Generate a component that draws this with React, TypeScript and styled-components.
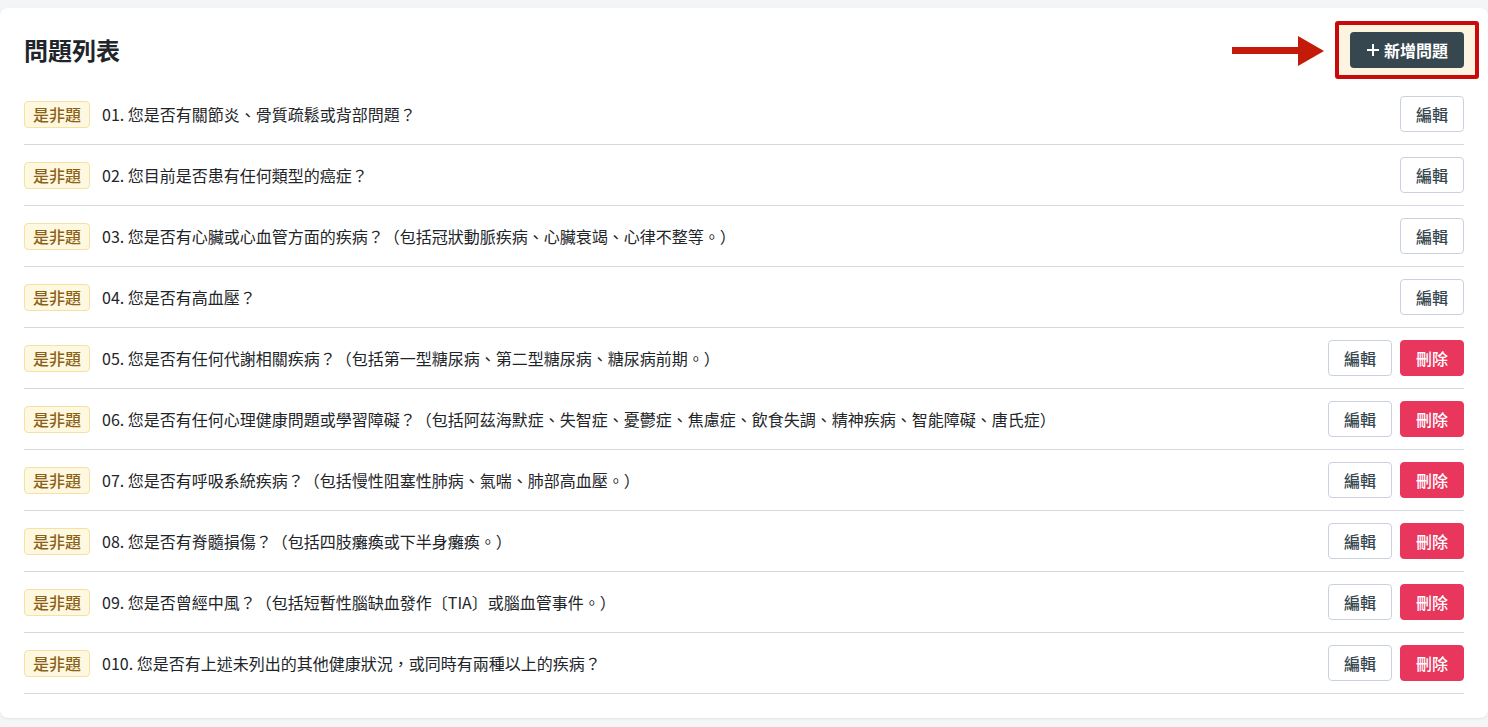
import React from 'react';
import styled, { createGlobalStyle } from 'styled-components';

const GlobalStyle = createGlobalStyle`
    body {
        margin: 0;
        background: #f4f5f7;
        font-family: 'Noto Sans CJK TC', 'Noto Sans', sans-serif;
        color: #212529;
    }
`;

const Page = styled.div`
    padding-top: 8px;
    padding-bottom: 9px;
`;

const Card = styled.div`
    background: #ffffff;
    border-radius: 8px;
    box-shadow: 0 1px 3px rgba(0, 0, 0, 0.08);
    padding: 24px;
`;

const Header = styled.div`
    display: flex;
    align-items: center;
    justify-content: space-between;
    height: 36px;
    margin-bottom: 16px;
`;

const Title = styled.h1`
    margin: 0;
    font-size: 24px;
    font-weight: 700;
    line-height: 36px;
    color: #212529;
`;

const AddWrap = styled.div`
    position: relative;
    display: flex;
`;

const HighlightFrame = styled.div`
    position: absolute;
    top: -11px;
    bottom: -11px;
    left: -15px;
    right: -15px;
    border: 4px solid #c80a0a;
    border-radius: 3px;
    background: #fdf3e1;
    z-index: 0;
`;

const Arrow = styled.svg`
    position: absolute;
    left: -118px;
    top: 3px;
`;

const AddButton = styled.button`
    position: relative;
    z-index: 1;
    display: flex;
    align-items: center;
    gap: 4px;
    height: 36px;
    padding: 0 16px;
    border: none;
    border-radius: 4px;
    background: #37474f;
    color: #ffffff;
    font-family: inherit;
    font-size: 16px;
    font-weight: 700;
`;

const List = styled.div`
    display: flex;
    flex-direction: column;
`;

const Row = styled.div`
    display: flex;
    align-items: center;
    gap: 12px;
    padding: 12px 0;
    border-bottom: 1px solid #d6d8de;
`;

const Badge = styled.span`
    flex: none;
    padding: 0 8px;
    height: 27px;
    line-height: 25px;
    box-sizing: border-box;
    border: 1px solid #f5e1a4;
    border-radius: 4px;
    background: #fff8e1;
    color: #8a6116;
    font-size: 16px;
    font-weight: 500;
`;

const Question = styled.span`
    flex: 1;
    font-size: 16px;
    color: #212529;
    white-space: nowrap;
`;

const Actions = styled.div`
    display: flex;
    gap: 8px;
`;

const ActionButton = styled.button<{ $danger?: boolean }>`
    width: 64px;
    height: 36px;
    border-radius: 4px;
    font-family: inherit;
    font-size: 16px;
    font-weight: 500;
    border: 1px solid ${p => (p.$danger ? '#e8365d' : '#c9d2de')};
    background: ${p => (p.$danger ? '#e8365d' : '#ffffff')};
    color: ${p => (p.$danger ? '#ffffff' : '#37474f')};
`;

const questions = [
    '01. 您是否有關節炎、骨質疏鬆或背部問題？',
    '02. 您目前是否患有任何類型的癌症？',
    '03. 您是否有心臟或心血管方面的疾病？（包括冠狀動脈疾病、心臟衰竭、心律不整等。）',
    '04. 您是否有高血壓？',
    '05. 您是否有任何代謝相關疾病？（包括第一型糖尿病、第二型糖尿病、糖尿病前期。）',
    '06. 您是否有任何心理健康問題或學習障礙？（包括阿茲海默症、失智症、憂鬱症、焦慮症、飲食失調、精神疾病、智能障礙、唐氏症）',
    '07. 您是否有呼吸系統疾病？（包括慢性阻塞性肺病、氣喘、肺部高血壓。）',
    '08. 您是否有脊髓損傷？（包括四肢癱瘓或下半身癱瘓。）',
    '09. 您是否曾經中風？（包括短暫性腦缺血發作〔TIA〕或腦血管事件。）',
    '010. 您是否有上述未列出的其他健康狀況，或同時有兩種以上的疾病？',
];

export default function App() {
    return (
        <Page>
            <GlobalStyle />
            <Card>
                <Header>
                    <Title>問題列表</Title>
                    <AddWrap>
                        <Arrow width="92" height="32" viewBox="0 0 92 32">
                            <rect x="0" y="12" width="68" height="7" fill="#c41a0a" />
                            <polygon points="66,1 92,16 66,31" fill="#c41a0a" />
                        </Arrow>
                        <HighlightFrame />
                        <AddButton>
                            <svg width="14" height="14" viewBox="0 0 14 14">
                                <path d="M7 1v12M1 7h12" stroke="#fff" strokeWidth="2" />
                            </svg>
                            新增問題
                        </AddButton>
                    </AddWrap>
                </Header>
                <List>
                    {questions.map((q, i) => (
                        <Row key={q}>
                            <Badge>是非題</Badge>
                            <Question>{q}</Question>
                            <Actions>
                                <ActionButton>編輯</ActionButton>
                                {i >= 4 && <ActionButton $danger>刪除</ActionButton>}
                            </Actions>
                        </Row>
                    ))}
                </List>
            </Card>
        </Page>
    );
}
